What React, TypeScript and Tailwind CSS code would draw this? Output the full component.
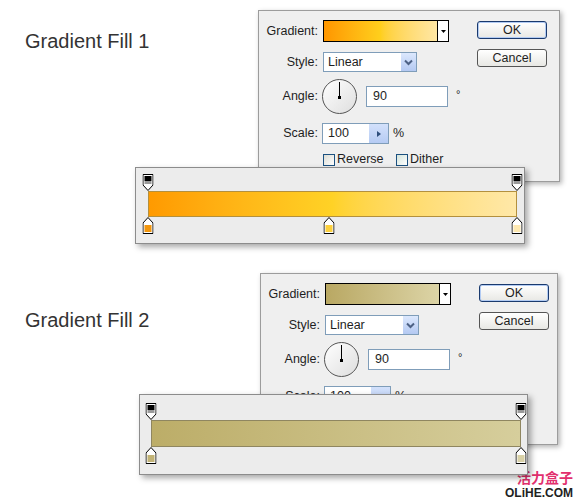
import React from "react";

type Stop = { pos: number; color: string };

function TopMarker() {
  return (
    <svg width="11" height="17" viewBox="0 0 11 17">
      <path d="M0.5 0.5 H10.5 V11 L5.5 16.5 L0.5 11 Z" fill="#fff" stroke="#000" />
      <rect x="2" y="2" width="7" height="5" fill="#000" />
      <rect x="2" y="7" width="7" height="3" fill="#9a9a9a" />
    </svg>
  );
}

function BottomMarker({ color }: { color: string }) {
  return (
    <svg width="11" height="17" viewBox="0 0 11 17">
      <path d="M5.5 0.5 L10.5 6 V16.5 H0.5 V6 Z" fill="#fff" stroke="#000" />
      <rect x="2" y="8" width="7" height="7" fill={color} />
    </svg>
  );
}

function Dialog({ swatch, width }: { swatch: string; width: string }) {
  return (
    <div className={`${width} h-[172px] flex-none bg-[#efefef] border border-[#9c9c9c] shadow-[2px_2px_5px_rgba(0,0,0,0.3)] flex pt-[9px] text-[12.5px] text-[#1e1e1e]`}>
      {/* form */}
      <div className="w-[218px] flex flex-col">
        <div className="flex items-center h-[22px]">
          <span className="w-[59px] text-right">Gradient:</span>
          <div className="ml-[5px] w-[126px] h-[22px] border border-black flex">
            <div className={`flex-1 ${swatch}`} />
            <div className="w-[11px] border-l border-black bg-white flex items-center justify-center">
              <svg width="5" height="3" viewBox="0 0 5 3">
                <path d="M0 0 H5 L2.5 3 Z" fill="#000" />
              </svg>
            </div>
          </div>
        </div>

        <div className="flex items-center h-[20px] mt-[10px]">
          <span className="w-[59px] text-right">Style:</span>
          <div className="ml-[5px] w-[94px] h-[20px] border border-[#7f9db9] bg-white flex">
            <span className="flex-1 pl-[4px] leading-[18px]">Linear</span>
            <div className="w-[15px] bg-linear-to-b from-[#dce8fd] to-[#b4c9f2] flex items-center justify-center">
              <svg width="9" height="7" viewBox="0 0 9 7">
                <path d="M1 1.5 L4.5 5 L8 1.5" fill="none" stroke="#4d6185" strokeWidth="2" />
              </svg>
            </div>
          </div>
        </div>

        <div className="flex items-center h-[35px] mt-[7px]">
          <span className="w-[59px] text-right">Angle:</span>
          <div className="ml-[4px] w-[35px] h-[35px] rounded-full border-[1.5px] border-[#555] bg-linear-to-br from-white to-[#dedede] relative">
            <div className="absolute left-[15.5px] top-[2px] w-px h-[15px] bg-black" />
            <div className="absolute left-[14.5px] top-[15.5px] w-[3px] h-[3px] bg-black" />
          </div>
          <div className="ml-[9px] w-[82px] h-[21px] border border-[#7f9db9] bg-white pl-[6px] leading-[19px]">90</div>
          <span className="ml-[8px] self-start mt-[7px] text-[11px]">°</span>
        </div>

        <div className="flex items-center h-[21px] mt-[9px]">
          <span className="w-[59px] text-right">Scale:</span>
          <div className="ml-[4px] w-[67px] h-[21px] border border-[#7f9db9] bg-white flex">
            <span className="flex-1 pl-[5px] leading-[19px]">100</span>
            <div className="w-[19px] bg-linear-to-b from-[#d3e1fb] to-[#b6cbf3] flex items-center justify-center">
              <svg width="4" height="6" viewBox="0 0 4 6">
                <path d="M0 0 L4 3 L0 6 Z" fill="#2e4e7c" />
              </svg>
            </div>
          </div>
          <span className="ml-[4px]">%</span>
        </div>

        <div className="flex items-center h-[13px] mt-[9px]">
          <div className="ml-[64px] w-[73px] flex items-center">
            <div className="w-[12px] h-[12px] border border-[#1c5180] bg-linear-to-br from-[#dcdcd4] to-white" />
            <span className="ml-[2px]">Reverse</span>
          </div>
          <div className="w-[12px] h-[12px] border border-[#1c5180] bg-linear-to-br from-[#d4e4dc] to-white" />
          <span className="ml-[2px]">Dither</span>
        </div>
      </div>

      {/* buttons */}
      <div className="w-[70px] flex flex-col gap-[10px] mt-[1px]">
        <div className="h-[18px] rounded-[3px] border border-[#1a3a6e] bg-linear-to-b from-white to-[#e8e8e4] shadow-[inset_0_0_0_1px_#b2cbf3] text-center leading-[16px]">
          OK
        </div>
        <div className="h-[18px] rounded-[3px] border border-[#555] bg-linear-to-b from-white to-[#e8e8e4] text-center leading-[16px]">
          Cancel
        </div>
      </div>
    </div>
  );
}

function Editor({
  className,
  barClass,
  barWidth,
  stops,
}: {
  className: string;
  barClass: string;
  barWidth: string;
  stops: Stop[];
}) {
  return (
    <div className={`relative z-10 bg-[#ececec] border border-[#8c8c8c] shadow-[3px_3px_6px_rgba(0,0,0,0.35)] ${className}`}>
      <div className={barWidth}>
        <div className="relative h-[17px]">
          {[0, 100].map((p) => (
            <div key={p} className="absolute top-0 -translate-x-1/2 leading-none" style={{ left: `${p}%` }}>
              <TopMarker />
            </div>
          ))}
        </div>
        <div className={barClass} />
        <div className="relative h-[17px]">
          {stops.map((s) => (
            <div key={s.pos} className="absolute top-0 -translate-x-1/2 leading-none" style={{ left: `${s.pos}%` }}>
              <BottomMarker color={s.color} />
            </div>
          ))}
        </div>
      </div>
    </div>
  );
}

export default function App() {
  return (
    <div className="w-[575px] h-[500px] overflow-hidden bg-white font-['Liberation_Sans',Arial,sans-serif]">
      {/* Gradient Fill 1 */}
      <div className="flex pt-[10px]">
        <h2 className="w-[258px] pl-[25px] pt-[21px] text-[20px] leading-none text-[#333]">Gradient Fill 1</h2>
        <Dialog
          width="w-[302px]"
          swatch="bg-linear-to-r from-[#ff9600] via-[#ffcf1c] to-[#ffe7a4]"
        />
      </div>
      <Editor
        className="-mt-[15px] ml-[135px] w-[390px] h-[77px] pt-[6px] pl-[12px]"
        barWidth="w-[369px]"
        barClass="h-[26px] border border-[#b3903e] bg-linear-to-r from-[#ff9a00] via-[#ffd226] to-[#ffe8a8]"
        stops={[
          { pos: 0, color: "#f3960c" },
          { pos: 49, color: "#fcd03c" },
          { pos: 100, color: "#fde8b0" },
        ]}
      />

      {/* Gradient Fill 2 */}
      <div className="flex mt-[29px]">
        <h2 className="w-[260px] pl-[25px] pt-[37px] text-[20px] leading-none text-[#333]">Gradient Fill 2</h2>
        <Dialog
          width="w-[298px]"
          swatch="bg-linear-to-r from-[#b9a863] to-[#dcd4a6]"
        />
      </div>
      <Editor
        className="-mt-[51px] ml-[139px] w-[389px] h-[81px] pt-[8px] pl-[11px]"
        barWidth="w-[370px]"
        barClass="h-[27px] border border-[#8f8660] bg-linear-to-r from-[#bcad68] to-[#d6ce9c]"
        stops={[
          { pos: 0, color: "#c2b375" },
          { pos: 100, color: "#d9d1a6" },
        ]}
      />

      {/* watermark */}
      <div className="flex flex-col items-end -mt-[5px] pr-[2px]">
        <span className="text-[14px] leading-none font-bold text-[#e2306e] font-['Noto_Sans_CJK_SC',sans-serif]">活力盒子</span>
        <span className="mt-[3px] text-[12px] leading-none font-bold text-[#222]">OLiHE.COM</span>
      </div>
    </div>
  );
}
